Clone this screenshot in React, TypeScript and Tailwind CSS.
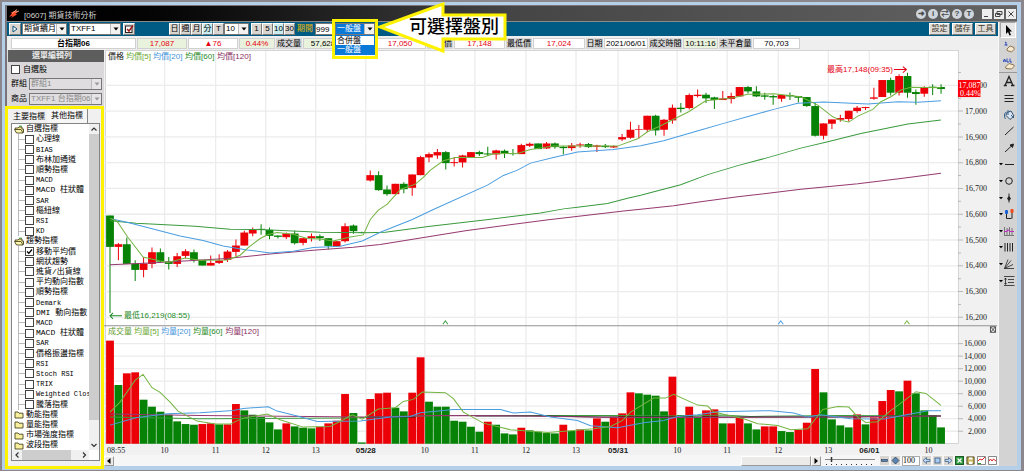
import { useState } from 'react'
import type { ReactNode } from 'react'

type Candle = [up: 0 | 1, top: number, bottom: number, high: number, low: number]

// Body and wick levels are stored in thirds of a pixel below the block's own base line
const BLOCKS: { base: number; candles: Candle[] }[] = [
  {
    base: 200,
    candles: [
      [0, 46, 140, 46, 338], [1, 132, 140, 128, 180], [0, 132, 191, 112, 191], [0, 190, 209, 180, 242], [1, 190, 209, 170, 231],
      [1, 156, 191, 142, 204], [0, 156, 184, 145, 188], [0, 184, 191, 170, 208], [1, 168, 191, 158, 200], [1, 153, 167, 147, 175],
      [0, 156, 179, 148, 187], [0, 179, 196, 179, 196], [1, 188, 196, 166, 196], [1, 181, 188, 162, 191], [1, 154, 179, 149, 185],
      [1, 136, 155, 118, 168], [1, 97, 136, 92, 136], [1, 87, 100, 82, 108], [0, 86, 89, 72, 104], [0, 89, 107, 82, 117],
      [0, 106, 110, 106, 115], [1, 100, 111, 97, 116], [0, 100, 129, 92, 133], [1, 114, 128, 114, 135], [1, 108, 114, 100, 124],
      [0, 108, 114, 103, 122], [0, 114, 137, 114, 147], [1, 123, 138, 123, 140], [1, 78, 123, 69, 127], [0, 76, 93, 73, 101],
      [0, 96, 98, 95, 99],
    ],
  },
  {
    base: 60,
    candles: [
      [1, 345, 361, 331, 364], [0, 345, 390, 333, 392], [0, 388, 402, 376, 407], [1, 371, 402, 371, 402], [0, 371, 387, 366, 399],
      [1, 343, 383, 343, 407], [1, 291, 345, 287, 345], [1, 282, 292, 277, 306], [1, 276, 286, 267, 296], [0, 276, 309, 273, 328],
      [1, 306, 309, 291, 319], [1, 286, 307, 284, 322], [1, 276, 291, 276, 291], [0, 276, 282, 272, 288], [0, 280, 283, 260, 287],
      [1, 271, 283, 269, 298], [0, 272, 279, 268, 294], [0, 279, 282, 267, 286], [1, 255, 282, 251, 282], [1, 251, 257, 247, 261],
      [0, 250, 267, 250, 267], [1, 250, 265, 246, 267], [0, 250, 261, 247, 266], [0, 260, 264, 258, 283], [1, 256, 264, 249, 272],
      [1, 253, 256, 248, 263], [0, 252, 261, 249, 264], [1, 256, 260, 254, 276], [0, 257, 261, 252, 264], [1, 258, 262, 256, 264],
      [1, 231, 238, 222, 243], [1, 209, 233, 185, 236], [1, 207, 209, 195, 235], [1, 167, 209, 167, 216], [0, 167, 211, 164, 226],
      [1, 179, 209, 177, 227], [1, 143, 181, 133, 191], [0, 143, 147, 129, 157], [1, 105, 144, 100, 148], [1, 104, 108, 88, 112],
      [0, 104, 115, 98, 129], [0, 112, 120, 110, 147], [1, 115, 120, 93, 120], [1, 108, 117, 98, 130], [1, 81, 109, 81, 109],
      [0, 81, 94, 78, 100], [0, 94, 109, 79, 111], [0, 106, 110, 98, 119], [0, 108, 112, 105, 134], [1, 105, 116, 105, 125],
      [0, 105, 109, 97, 120], [0, 108, 113, 108, 127], [0, 111, 138, 111, 140], [0, 138, 227, 128, 229], [1, 190, 227, 190, 238],
      [1, 178, 191, 178, 207], [1, 174, 179, 164, 185], [1, 152, 177, 152, 184], [1, 143, 153, 138, 158], [1, 141, 144, 140, 150],
      [1, 112, 116, 83, 119], [1, 60, 111, 60, 111], [0, 60, 98, 53, 106], [1, 48, 98, 43, 106], [0, 48, 98, 38, 113],
      [0, 96, 102, 88, 134], [1, 81, 101, 79, 110], [0, 80, 83, 73, 105], [0, 81, 87, 73, 101],
    ],
  },
]

// Negative = down bar
const VOLUMES = [
  309, -176, 211, 214, -132, -111, -96, -87, -67, -59, -57, 59, 61, -58, 58, 119, -100, -87, -80, -64,
  -43, 61, -52, -48, -46, 51, 61, 69, 149, -92, -4, 134, 151, 153, -108, -97, 153, 259, -126, -111,
  -111, -69, -66, -51, -36, 66, -57, -31, -28, 48, -40, -36, -32, -31, 57, -38, 43, -40, 76, -66,
  81, 91, 154, -151, -147, -144, -97, 201, -86, 111, -80, 100, 103, -61, 61, 80, -61, -43, 52, 52,
  -38, -35, 42, 63, 224, -154, -73, -55, -49, 88, -58, 79, 128, 161, -157, 189, -151, -100, -85, -49,
]

const PRICE_LINES = [
  { cor: '#963a70', pts: '110,264.5 150,262.7 227,258.3 267,254 313,250 353,247 380,244.3 465,230.5 548,219.5 623,210.7 640,209 673,205.5 700,201.5 737,196.7 800,189 857,183.7 900,178.3 940,173' },
  { cor: '#3a9a3e', pts: '110,220.5 136,223 195,226 230,229 265,229.5 320,232 365,232.5 385,232 430,226 486,219.5 540,212.7 563,208.7 577,207 607,203.3 627,198 640,195 680,184.5 707,174.5 737,165.5 767,157.5 800,148 827,141.7 860,133.5 907,124 940,120' },
  { cor: '#4a9de0', pts: '112,218.7 127,222 180,235.7 203,240.3 223,245.7 247,249.7 270,252.7 293,251 313,247.3 340,246 362,240.7 380,232 412,219.3 433,209.3 487,185 503,175.3 517,170 530,163 553,157.3 577,152 613,149.3 640,145.7 663,140.7 700,130 723,123.3 750,115.7 773,109.3 797,103.3 823,102 867,104 897,101.7 917,102.3 940,100.7' },
  { cor: '#74b440', pts: '110,218 117,221 128,237.3 143,256.7 160,260.7 168,262.3 185,257.7 200,260 227,259.7 240,255 248,247.3 260,238.3 268,234.3 277,232.3 293,234 307,238.3 320,238.7 333,240.7 350,236.7 363,234.7 370,219.3 378,210 387,204 400,189.3 415,184 423,177.3 430,170 443,160.7 455,157.3 482,157.3 493,153.7 517,153.3 530,149.3 553,146 617,146 637,138.7 647,131.7 660,125.7 688,111.7 705,100.7 733,97.7 747,94.3 773,93.7 800,96.7 817,105 832,116.7 840,120.3 848,122 857,116 872,109.3 880,101.7 890,96.7 900,90 910,87.3 940,87.7' },
]

const VOLUME_LINES = [
  { cor: '#3a9a3e', pts: '110,416.7 200,418.3 345,417.5 410,415.8 440,415 608,415 690,415.5 720,414.5 750,416 840,415 940,415.5' },
  { cor: '#222222', pts: '365,416.5 415,416.5' },
  { cor: '#222222', pts: '475,415.5 545,415.5 600,416.5 850,416.5 900,415.5 940,415.5' },
  { cor: '#963a70', pts: '110,413.7 200,415 365,416.5 440,415 530,415.5 615,417 720,417 830,416.5 940,415.5' },
  { cor: '#4a9de0', pts: '110,424.7 137,417 167,413.3 200,412.3 233,410 243,408 268,406.3 277,410.7 297,415.7 317,421 360,420.7 390,416.7 410,416 420,412.3 453,409 500,409 513,412.7 530,411.7 550,416.7 577,420 590,425.3 617,427.3 643,422.3 663,420 677,416 697,414.3 717,411.3 770,410.3 793,412.7 807,416.7 820,414.3 850,418.3 883,418.7 907,414 927,410.3 940,410.3' },
  { cor: '#74b440', pts: '110,411.7 120,401.7 135,380 143,374 152,387.3 160,392 170,401.7 178,410.7 197,420.7 215,423.7 230,423.7 243,417.7 267,413.7 280,419.3 303,426.7 330,426 343,419.3 352,414.3 362,418.7 378,408.7 395,407.3 403,401 413,399 422,391.7 445,392.3 453,398.3 463,411.7 483,422.7 510,429.3 547,432 573,430 593,428.3 610,426 622,420 630,411.7 653,397.7 665,397.7 673,394 697,404.7 707,405.7 713,411.7 743,418.3 757,423.3 777,425 790,429.3 807,428.3 822,409 837,406 848,406.7 857,416.7 865,422 877,421.3 890,410 898,404.3 915,391.3 925,393 940,405' },
]

const TIMES: [number, string][] = [
  [164.5, '10'], [215.5, '11'], [265.5, '12'], [315.5, '13'], [365.5, '05/28'], [424.5, '10'], [474.5, '11'], [525.5, '12'],
  [575.5, '13'], [617.5, '05/31'], [676.5, '10'], [726.5, '11'], [777.5, '12'], [827.5, '13'], [868.5, '06/01'], [927.5, '10'],
]

const PRICES = ['17,100', '17,000', '16,900', '16,800', '16,700', '16,600', '16,500', '16,400', '16,300', '16,200']
const VOLUME_TICKS = ['16,000', '14,000', '12,000', '10,000', '8,000', '6,000', '4,000', '2,000']

const LEGEND_COLORS = ['#6aa832', '#3f95dc', '#1e8a26', '#8a2c60']

const TREE = [
  { name: '自選指標', open: true, items: ['心理線', 'BIAS', '布林加通道', '順勢指標', 'MACD', 'MACD 柱狀體', 'SAR', '樞紐線', 'RSI', 'KD'] },
  {
    name: '趨勢指標',
    open: true,
    items: ['移動平均價', '網狀趨勢', '進貨/出貨線', '平均動向指數', '順勢指標', 'Demark', 'DMI 動向指數', 'MACD', 'MACD 柱狀體', 'SAR', '價格振盪指標', 'RSI', 'Stoch RSI', 'TRIX', 'Weighted Clos', '騰落指標'],
  },
  { name: '動能指標', open: false, items: [] },
  { name: '量能指標', open: false, items: [] },
  { name: '市場強度指標', open: false, items: [] },
  { name: '波段指標', open: false, items: [] },
]

const UP = '#ec0008'
const DOWN = '#068206'
const candleX = (i: number) => 110 + i * 8.385

export default function App() {
  const [session, setSession] = useState('一般盤')

  return (
    <div className="relative min-w-[900px] border-2 border-r-[3px] border-b border-[#8b878d] bg-[#b6cfe9] pt-[3px] pr-1 pb-[4px] pl-[3px] font-['Liberation_Sans','Noto_Sans_CJK_TC',sans-serif] text-[8px] leading-[10px] text-black">
      <div className="border-t border-l-2 border-[#77757a] bg-[#efefef]">
        <TitleBar />
        <div className="flex">
          <div className="min-w-0 flex-1">
            <Toolbar session={session} setSession={setSession} />
            <QuoteBar />
            <div className="flex">
              <SidePanel />
              <main className="min-w-0 flex-1">
                <Chart />
                <BottomBar />
              </main>
            </div>
          </div>
          <ToolRail />
        </div>
      </div>
      <Callout />
    </div>
  )
}

function TitleBar() {
  return (
    <header className="flex h-4 items-center border-b border-[#8a8a8a] bg-linear-to-r from-black via-[#454545] to-[#636363] text-[#d5d5d5]">
      <svg className="ml-px h-3 w-3" viewBox="0 0 12 12">
        <path d="M1 9 L4 5.5 L2.5 5 L9 1.5 L7 4 L11 3 L7.5 6 L9 6.5 L3 10 L5 7.6 Z" fill="#ff4a28" />
        <path d="M4 5.5 L9 1.5 M7 4 L11 3" stroke="#ffc9a8" strokeWidth=".7" />
      </svg>
      <h1 className="ml-1 whitespace-nowrap pt-1">[0607] 期貨技術分析</h1>
      <div className="ml-auto flex items-center gap-0.5">
        {['➜', 'i', '⇄', '?', 'T'].map(g => (
          <button key={g} className="flex h-2.5 w-2.5 items-center justify-center rounded-full bg-[#cfd5dc] text-[8px] font-bold leading-none text-[#4a4a4a]">
            {g}
          </button>
        ))}
      </div>
      <div className="mr-px ml-2 flex gap-0.5">
        <WindowButton label="縮小"><path d="M2 7.5h4" /></WindowButton>
        <WindowButton label="還原"><path d="M3 2.5h5v3H3zM1.500 4.500h4.500v3h-4.500z" /></WindowButton>
        <WindowButton label="關閉"><path d="M2.500 2.500l5 5M7.500 2.500l-5 5" /></WindowButton>
      </div>
    </header>
  )
}

function WindowButton({ label, children }: { label: string; children: ReactNode }) {
  return (
    <button aria-label={label} className="h-2.5 w-2.5 bg-[#eeeeee]">
      <svg viewBox="0 0 10 10" className="h-2.5 w-2.5" fill="none" stroke="#444">{children}</svg>
    </button>
  )
}

function ArrowIcon({ className = '' }: { className?: string }) {
  return (
    <svg viewBox="0 0 8 8" className={`h-2 w-2 ${className}`}><path d="M1.500 2.500h5L4 5.500z" fill="currentColor" /></svg>
  )
}

function Combo({ label, options, className, disabled, selected }: {
  label: string; options: string[]; className: string; disabled?: boolean; selected?: boolean
}) {
  return (
    <div className={`relative flex h-3 border border-[#777] bg-white ${className}`}>
      <select
        aria-label={label}
        disabled={disabled}
        className={`h-full w-full appearance-none overflow-hidden pl-px leading-[10px] outline-none ${disabled ? 'bg-[#dfdddf] text-[#8a8a8a]' : ''} ${selected ? 'bg-[#0a78d7] text-white' : ''}`}
      >
        {options.map(o => <option key={o}>{o}</option>)}
      </select>
      <span className={`pointer-events-none absolute inset-y-0 right-0 flex w-2.5 items-center justify-center border-l border-[#bbb] ${disabled ? 'bg-[#e6e4e6] text-[#999]' : 'bg-[#f4f2f0] text-black'}`}>
        <ArrowIcon />
      </span>
    </div>
  )
}

function Toolbar({ session, setSession }: { session: string; setSession: (s: string) => void }) {
  const btn = 'h-3 border border-[#7a7a7a] border-t-white border-l-white text-center leading-[10px]'
  return (
    <div className="flex h-[14px] items-center bg-[#005b84] px-0.5">
      <button aria-label="展開" className={`${btn} flex w-3 items-center justify-center bg-[#d9d5d0]`}>
        <svg viewBox="0 0 8 8" className="h-2 w-2"><path d="M2 1v6l4-3z" fill="#fff" stroke="#0b527a" /></svg>
      </button>
      <Combo label="商品類別" options={['期貨續月']} className="ml-px w-[45px]" />
      <Combo label="商品代碼" options={['TXFF1']} className="ml-0.5 w-[52px]" />
      <button aria-label="套用" className={`${btn} ml-0.5 flex w-3 items-center justify-center bg-[#d9d5d0]`}>
        <svg viewBox="0 0 10 10" className="h-2.5 w-2.5" fill="none">
          <rect x="1.500" y="2" width="6.500" height="6.500" fill="#fff" stroke="#222" />
          <path d="M3 5l2 2 4-5.500" stroke="#a01818" strokeWidth="1.500" />
        </svg>
      </button>
      <div className="ml-[34px] flex">
        {['日', '週', '月', '分', 'T'].map(p => (
          <button key={p} className={`${btn} w-[11px] ${p === '分' ? 'bg-[#c8ecf0]' : 'bg-[#d9d5d0]'}`}>{p}</button>
        ))}
      </div>
      <Combo label="分鐘" options={['10']} className="w-[25px]" />
      <div className="ml-0.5 flex">
        {['1', '5', '10', '30'].map(m => (
          <button key={m} className={`${btn} w-[11px] ${m === '10' ? 'bg-[#c8ecf0]' : 'bg-[#d9d5d0]'}`}>{m}</button>
        ))}
      </div>
      <label className="ml-0.5 flex items-center gap-0.5 whitespace-nowrap font-bold text-[#b89f2c]">
        期間
        <input defaultValue="999" className="h-3 w-[18px] border border-[#777] bg-white font-normal text-black outline-none" />
      </label>
      <div className="relative z-10 ml-0.5">
        <Combo label="盤別" options={[session]} className="w-10" selected />
        <ul role="listbox" aria-label="盤別" className="absolute top-3 left-0 w-10 border border-[#0a78d7] bg-white">
          {['合併盤', '一般盤'].map(s => (
            <li
              key={s}
              role="option"
              aria-selected={s === session}
              onClick={() => setSession(s)}
              className={`h-[9px] pl-px leading-[9px] ${s === session ? 'bg-[#0a78d7] text-white' : ''}`}
            >
              {s}
            </li>
          ))}
        </ul>
      </div>
      <div className="ml-auto flex gap-0.5">
        {['設定', '儲存', '工具'].map(b => (
          <button key={b} className={`${btn} w-[21px] bg-[#e0ddd8] text-[#3d3a2c]`}>{b}</button>
        ))}
      </div>
    </div>
  )
}

function Cell({ children, className }: { children: ReactNode; className: string }) {
  return <dd className={`h-[11px] shrink-0 border border-[#d0d0d0] text-center leading-[10px] ${className}`}>{children}</dd>
}

function Term({ children, className }: { children: ReactNode; className: string }) {
  return <dt className={`h-[11px] shrink-0 whitespace-nowrap bg-[#d6d6d6] text-center leading-[11px] ${className}`}>{children}</dt>
}

function QuoteBar() {
  return (
    <dl className="flex h-[14px] items-center gap-px pl-1">
      <Cell className="w-[125px] bg-white font-bold">台指期06</Cell>
      <Cell className="w-[50px] bg-[#e9f2dc] text-[#e60012]">17,087</Cell>
      <Cell className="w-[50px] bg-white text-[#e60012]">▲76</Cell>
      <Cell className="w-9 bg-[#e9f2dc] text-[#e60012]">0.44%</Cell>
      <Term className="w-[26px]">成交量</Term>
      <Cell className="w-10 bg-[#e9f2dc]">57,628</Cell>
      <Term className="w-[29px]">開盤價</Term>
      <Cell className="w-[52px] bg-white text-[#e60012]">17,050</Cell>
      <Term className="w-[26px]">最高價</Term>
      <Cell className="w-[51px] bg-white text-[#e60012]">17,148</Cell>
      <Term className="w-[26px]">最低價</Term>
      <Cell className="w-[52px] bg-white text-[#e60012]">17,024</Cell>
      <Term className="w-[17px]">日期</Term>
      <Cell className="w-[44px] bg-white">2021/06/01</Cell>
      <Term className="w-[33px]">成交時間</Term>
      <Cell className="w-[35px] bg-[#e9f2dc]">10:11:16</Cell>
      <Term className="w-[33px]">未平倉量</Term>
      <Cell className="w-[47px] bg-white">70,703</Cell>
    </dl>
  )
}

function FolderIcon({ open }: { open: boolean }) {
  return (
    <svg viewBox="0 0 10 9" className="h-[9px] w-2.5 shrink-0" strokeWidth=".9" stroke="#4a4620">
      {open ? (
        <>
          <path d="M1 3h3l1-1h3v2h1.500v3.500H2.500z" fill="#f4e98c" />
          <path d="M.5 4.500h6.500l2 3.500h-6.500z" fill="#fdf7b4" />
          <path d="M5 1.200h3" stroke="#2c8b2c" />
        </>
      ) : (
        <path d="M1 2h3l1 1.200h4v4.800H1z" fill="#f8ef9c" />
      )}
    </svg>
  )
}

function TickBox({ checked = false }: { checked?: boolean }) {
  return (
    <span className="relative flex h-[9px] w-[9px] shrink-0">
      <input type="checkbox" defaultChecked={checked} className="peer h-full w-full appearance-none border border-[#444] bg-white" />
      <svg viewBox="0 0 9 9" className="pointer-events-none absolute inset-0 hidden h-full w-full peer-checked:block">
        <path d="M2 4.500l1.800 1.800L7 2.500" fill="none" stroke="#000" strokeWidth="1.300" />
      </svg>
    </span>
  )
}

function SidePanel() {
  return (
    <aside className="flex w-[97px] shrink-0 flex-col bg-[#dad8da]">
      <h2 className="h-3 border-l border-[#ddd] bg-[#5d5d5d] pr-2 text-center font-bold leading-[12px] text-[#e8e8e8]">選單編輯列</h2>
      <label className="flex h-[15px] items-center gap-[3px] pl-1">
        <TickBox />
        自選股
      </label>
      <div className="flex h-[14px] items-center gap-0.5 pl-1">
        群組 <Combo label="群組" options={['群組1']} className="w-[73px]" disabled />
      </div>
      <div className="flex h-[15px] items-center gap-0.5 pl-1">
        商品 <Combo label="商品" options={['TXFF1 台指期06;1']} className="w-[73px]" disabled />
      </div>

      <section className="relative flex flex-1 flex-col bg-[#f0f0f0] pt-[3px] pr-1 pb-[5px] pl-1">
        <div role="tablist" className="flex h-[14px] items-end">
          <button role="tab" aria-selected="false" className="h-3 w-9 whitespace-nowrap text-center">主要指標</button>
          <button role="tab" aria-selected="true" className="h-[14px] w-[41px] whitespace-nowrap border-r border-[#888] bg-[#f6f6f6] text-center">其他指標</button>
        </div>
        <div className="flex flex-1 flex-col border border-[#848484] bg-white">
          <div className="flex flex-1">
            <div className="flex w-0 flex-1 flex-col overflow-hidden">
              {TREE.map(group => [
                <div key={group.name} className="flex flex-1 items-center gap-0.5 whitespace-nowrap pl-0.5">
                  <FolderIcon open={group.open} />
                  {group.name}
                </div>,
                ...group.items.map(item => (
                  <label key={group.name + item} className="ml-1.5 flex flex-1 items-center whitespace-nowrap border-l border-[#bbb]">
                    <span className="h-px w-1.5 shrink-0 bg-[#bbb]" />
                    <TickBox checked={item === '移動平均價'} />
                    <span className={`ml-0.5 font-['Liberation_Mono','Noto_Sans_CJK_TC',monospace] ${/^[\w ]+$/.test(item) ? 'text-[7px]' : ''}`}>{item}</span>
                  </label>
                )),
              ])}
            </div>
            <div className="flex w-2.5 flex-col items-center bg-[#f0f0f0]">
              <svg viewBox="0 0 10 10" className="h-2.5 w-2.5" fill="none" stroke="#333" strokeWidth="1.200"><path d="M2.500 6.500L5 4l2.500 2.500" /></svg>
              <div className="w-full flex-1 bg-[#cdcdcd]" />
              <div className="h-5" />
              <svg viewBox="0 0 10 10" className="h-2.5 w-2.5" fill="none" stroke="#333" strokeWidth="1.200"><path d="M2.500 4L5 6.500 7.500 4" /></svg>
            </div>
          </div>
          <div className="mr-2.5 flex h-2.5 items-center bg-[#f0f0f0]">
            <svg viewBox="0 0 10 10" className="h-2.5 w-2.5" fill="none" stroke="#333" strokeWidth="1.200"><path d="M6.500 2.500L4 5l2.500 2.500" /></svg>
            <div className="h-full w-[49px] bg-[#cdcdcd]" />
            <svg viewBox="0 0 10 10" className="ml-auto h-2.5 w-2.5" fill="none" stroke="#333" strokeWidth="1.200"><path d="M4 2.500L6.500 5 4 7.500" /></svg>
          </div>
        </div>
        <div className="pointer-events-none absolute top-0 right-0 -bottom-[3px] -left-0.5 border-[3px] border-[#fff200]" />
      </section>
    </aside>
  )
}

function Legend({ y, title, titleColor, name }: { y: number; title: string; titleColor: string; name: string }) {
  const start = title.length === 2 ? 126 : 134
  return (
    <g>
      <text x={108} y={y} fill={titleColor}>{title}</text>
      {['[5]', '[20]', '[60]', '[120]'].map((n, i) => (
        <text key={n} x={start + [0, 27, 59, 91][i]} y={y} fill={LEGEND_COLORS[i]}>{name}{n}</text>
      ))}
    </g>
  )
}

function Chart() {
  let index = 0
  return (
    <svg viewBox="104 50 893 405" className="block h-auto w-full" fontSize="8">
      <rect x="104" y="50" width="893" height="405" fill="#f1f1f1" />
      <rect x="105" y="51" width="852" height="392" fill="#fff" />
      <path d="M105 50.500H957.500V443M105.500 50V443H957" fill="none" stroke="#d4d4d4" />

      <g stroke="#ececec" strokeWidth="1.300">
        {PRICES.map((p, i) => <line key={p} x1="105" x2="957" y1={85.3 + i * 25.75} y2={85.3 + i * 25.75} />)}
        {VOLUME_TICKS.map((v, i) => <line key={v} x1="105" x2="957" y1={343.3 + i * 12.5} y2={343.3 + i * 12.5} />)}
        {TIMES.map(([x]) => <line key={x} x1={x} x2={x} y1="51" y2="443" />)}
      </g>

      {/* right axis */}
      <g fontFamily="Liberation Serif, serif" fill="#222">
        {PRICES.map((p, i) => (
          <g key={p}>
            <path d={`M957 ${85.3 + i * 25.75}h5M957 ${72.4 + i * 25.75}h3`} stroke="#b8b8b8" />
            <text x="964" y={88 + i * 25.75}>{p}</text>
          </g>
        ))}
        {VOLUME_TICKS.map((v, i) => (
          <g key={v}>
            <path d={`M957 ${343.3 + i * 12.5}h5`} stroke="#b8b8b8" />
            <text x="985" y={346 + i * 12.5} textAnchor="end">{v}</text>
          </g>
        ))}
        <text x="107" y="453">08:55</text>
        {TIMES.map(([x, t]) => (
          <text key={x} x={x} y="453" textAnchor="middle" fontWeight={t.length > 2 ? 700 : 400} fontFamily={t.length > 2 ? 'Liberation Sans' : undefined}>{t}</text>
        ))}
      </g>

      {VOLUMES.map((v, i) => {
        const h = Math.abs(v) / 3
        return <rect key={i} x={candleX(i) - 3.9} y={443.3 - h} width="7.800" height={h} fill={v > 0 ? UP : DOWN} />
      })}

      {BLOCKS.map(({ base, candles }) => candles.map(([up, top, bottom, high, low]) => {
        const i = index++
        const x = candleX(i)
        const cor = up ? UP : DOWN
        return (
          <g key={i} fill={cor}>
            <line x1={x} x2={x} y1={base + high / 3} y2={base + low / 3} stroke={cor} />
            <rect x={x - 3.9} y={base + top / 3} width="7.800" height={(bottom - top) / 3} />
          </g>
        )
      }))}

      <g fill="none" strokeWidth="1">
        {[...PRICE_LINES, ...VOLUME_LINES].map(l => <polyline key={l.pts} points={l.pts} stroke={l.cor} />)}
        <path d="M442.500 324l2.500-3.500 2.500 3.500" stroke="#3a9a3e" />
        <path d="M777.500 324l2.500-3.500 2.500 3.500" stroke="#4a9de0" />
        <path d="M903.500 324l2.500-3.500 2.500 3.500" stroke="#74b440" />
        <path d="M104 325.500H996" stroke="#929292" />
        <path d="M122 315.500H110M113 312.500l-3 3 3 3" stroke="#1e8a26" />
        <path d="M893 69.500h12M902 66.500l3.500 3-3.500 3" stroke="#e60012" />
        <path d="M989.500 326.500h5v5.500h-5zM989.500 326.500l5 5.500M994.500 326.500l-5 5.500" stroke="#333" strokeWidth=".8" />
      </g>

      <text x="124" y="318" fill="#1e8a26">最低16,219(08:55)</text>
      <text x="892" y="72" fill="#e60012" textAnchor="end">最高17,148(09:35)</text>
      <Legend y={59} title="價格" titleColor="#111" name="均價" />
      <Legend y={334} title="成交量" titleColor="#5f9a2c" name="均量" />

      <rect x="957" y="80" width="22.500" height="17" fill="#fb0008" />
      <g fill="#fff" fontFamily="Liberation Serif, serif">
        <text x="957.500" y="87.500">17,087</text>
        <text x="959" y="95.500">0.44%</text>
      </g>
    </svg>
  )
}

function BottomBar() {
  const icon = 'flex h-[9px] w-[9px] items-center justify-center bg-[#d9d5d0]'
  return (
    <div className="flex h-[11px] items-center bg-[#f6f6f6]">
      <button aria-label="向左捲動" className="flex h-[10px] w-[10px] items-center justify-center border border-[#999] border-t-white border-l-white bg-[#eceae8]">
        <svg viewBox="0 0 6 6" className="h-1.5 w-1.5"><path d="M4.500 0v6L1 3z" /></svg>
      </button>
      <div className="ml-auto h-[10px] w-[70px] border border-[#999] border-t-white border-l-white bg-[#eceae8]" />
      <button aria-label="向右捲動" className="flex h-[10px] w-[10px] items-center justify-center border border-[#999] border-t-white border-l-white bg-[#eceae8]">
        <svg viewBox="0 0 6 6" className="h-1.5 w-1.5"><path d="M1.500 0v6L5 3z" /></svg>
      </button>
      <div className="relative ml-1 h-[10px] w-[51px]">
        <svg viewBox="0 0 51 10" className="h-full w-full" fill="none" stroke="#333">
          <path d="M0 3.500h50" stroke="#888" />
          <path d="M6.500 1v5" strokeWidth="1.500" />
          <path d="M1 8.500h50" strokeDasharray="1 4" />
        </svg>
        <input type="range" aria-label="縮放" defaultValue="12" className="absolute inset-0 h-full w-full opacity-0" />
      </div>
      <div className="mr-px ml-1 flex items-center gap-0.5">
        <button aria-label="縮小比例" className={icon}>
          <svg viewBox="0 0 9 9" className="h-full w-full"><rect x="1.500" y="3.500" width="6" height="2" fill="#5c84b0" stroke="#223a58" strokeWidth=".6" /></svg>
        </button>
        <button aria-label="放大比例" className={icon}>
          <svg viewBox="0 0 9 9" className="h-full w-full"><path d="M4.500 1L8 4.500 4.500 8 1 4.500z" fill="#5c84b0" stroke="#223a58" strokeWidth=".7" /></svg>
        </button>
        <input aria-label="比例" defaultValue="100" className="h-[10px] w-[18px] border border-[#aaa] bg-white font-['Liberation_Serif',serif] outline-none" />
        <button aria-label="上一頁" className={icon}>
          <svg viewBox="0 0 9 9" className="h-full w-full"><path d="M1 4.500L4.500 1.500v2H8v2H4.500v2z" fill="#bcd8f4" stroke="#34587e" strokeWidth=".7" /></svg>
        </button>
        <button aria-label="停止" className={icon}>
          <svg viewBox="0 0 9 9" className="h-full w-full"><rect x="2" y="2" width="5" height="5" fill="#a8ccf0" stroke="#34587e" strokeWidth=".8" /></svg>
        </button>
        <button aria-label="下一頁" className={icon}>
          <svg viewBox="0 0 9 9" className="h-full w-full"><path d="M8 4.500L4.500 1.500v2H1v2h3.500v2z" fill="#bcd8f4" stroke="#34587e" strokeWidth=".7" /></svg>
        </button>
        <button aria-label="匯出" className={icon}>
          <svg viewBox="0 0 9 9" className="h-full w-full"><rect x=".5" y=".5" width="8" height="8" fill="#2c9a3c" stroke="#1b5c26" /><path d="M2.500 2.500l4 4M6.500 2.500l-4 4" stroke="#fff" strokeWidth="1.200" /></svg>
        </button>
        <button aria-label="存檔" className={icon}>
          <svg viewBox="0 0 9 9" className="h-full w-full"><path d="M1 1h7v7H1z" fill="#c9b95c" stroke="#5a5226" /><path d="M3 1.500h3.500v2H3zM3 5.500h3.500v2.500H3z" fill="#fff" /></svg>
        </button>
        <button aria-label="價圖" className={icon}>
          <svg viewBox="0 0 9 9" className="h-full w-full"><path d="M.5.5h8v8h-8z" fill="#fff" stroke="#8a8a8a" /><path d="M1 5l2-2 2 1 3-3" fill="none" stroke="#e02020" /><path d="M1 7.500h3" stroke="#2a9a30" /></svg>
        </button>
        <button aria-label="量圖" className={icon}>
          <svg viewBox="0 0 9 9" className="h-full w-full"><path d="M.5.5h8v8h-8z" fill="#fff" stroke="#8a8a8a" /><path d="M1 5l1.500-2 1.500 2 1.500-2 2.500 2" fill="none" stroke="#e02020" /></svg>
        </button>
      </div>
    </div>
  )
}

const RAIL_TOP: { label: string; icon: ReactNode }[] = [
  { label: '選取', icon: <path d="M4 1v9l2-2 1.500 3.500 1.500-.6L7.500 7.500H10z" fill="#000" stroke="none" /> },
  {
    label: '擦除',
    icon: <><path d="M2 1.500l1-.5v3M1.500 4h3" stroke="#2846b8" /><path d="M4 8l3-3 4 1.500v2L8.500 11 4 9.500z" fill="#f7ecd2" stroke="#8a7450" /></>,
  },
  {
    label: '全部擦除',
    icon: <><path d="M0 4l1.500-3L3 4M.7 3h1.600M4 .5v3.500h2M7 .5v3.500h2" stroke="#2846b8" /><path d="M2.500 9l3.500-3.500 5 1.500v1.500L8.500 11 3 10.500z" fill="#f7ecd2" stroke="#8a7450" /></>,
  },
]

const RAIL: { label: string; menu?: boolean; icon: ReactNode }[] = [
  { label: '文字', icon: <path d="M2 10.500L6 1.500l4 9M3.500 7.500h5M.8 10.500h3M8 10.500h3.500" strokeWidth="1.300" /> },
  { label: '線寬', icon: <path d="M1.500 3.500h9M1.500 6.500h9M1.500 9.500h9" /> },
  { label: '填色', icon: <><path d="M4 3.500L8 2l3 5-4 3.500-4-4z" fill="#d8e6f4" stroke="#35506e" /><path d="M3.500 3C1 3.500 1 8 2.500 10M5 1v5M8 6l3 3" stroke="#35608e" /></> },
  { label: '直線', icon: <path d="M2 10L10.500 2" /> },
  { label: '箭頭', icon: <><path d="M2 10l7-6.500" /><path d="M10.500 2L9.500 5.500 7 3z" fill="#222" /></> },
  { label: '水平線', menu: true, icon: <path d="M2 6.500h9" /> },
  { label: '圓形', menu: true, icon: <circle cx="6" cy="6" r="3.300" /> },
  { label: '標記', menu: true, icon: <><path d="M6 1.500v9" /><path d="M6 4l2 2.500-2 2.500-2-2.500z" fill="#222" stroke="none" /></> },
  { label: 'K線', menu: true, icon: <><rect x="2" y="2" width="3" height="4" rx="1" fill="#1860d8" stroke="none" /><rect x="7.500" y="1" width="3" height="4" rx="1" fill="#f04818" stroke="none" /><path d="M3.500 6v4.500h5M9 5v5.500" /></> },
  { label: '週期線', menu: true, icon: <><path d="M1.500 2v8M4 3v7M6.500 2v8M9 3v7M1 10.500h10" stroke="#777" /><path d="M1 6.500h3l1-2 1.500 2h4.500" stroke="#c028c0" /></> },
  { label: '垂直線', menu: true, icon: <path d="M2 2v8.500M4.500 2v8.500M7 2v8.500M9.500 2v8.500" /> },
  { label: '扇形線', menu: true, icon: <path d="M1.500 10.500L5 1.500M1.500 10.500l6.500-8M1.500 10.500l8.500-4M1.500 10.500h9.500" strokeWidth=".8" /> },
  { label: '黃金分割', menu: true, icon: <path d="M1 1.500h10.500M1 10.500h10.500M5 4.500h6M5 7.500h6M2.500 3v6M1.500 4.500L2.500 3l1 1.500M1.500 8l1 1.500 1-1.500" strokeWidth=".8" /> },
]

function ToolRail() {
  return (
    <nav className="w-[19px] shrink-0 border-l border-[#f8f8f8] bg-[#d3d3d3]">
      <div className="flex h-[51px] flex-col border-b border-[#999]">
        {RAIL_TOP.map((t, i) => (
          <button key={t.label} aria-label={t.label} className="flex flex-1 items-center justify-end pr-px">
            <span className={`p-px ${i === 0 ? 'border border-[#a5a5a5] border-r-white border-b-white bg-[#e8e8e8]' : ''}`}>
              <svg viewBox="0 0 12 12" className="h-3 w-3" fill="none" stroke="#222">{t.icon}</svg>
            </span>
          </button>
        ))}
      </div>
      <div className="flex h-[216px] flex-col">
        {RAIL.map(t => (
          <button key={t.label} aria-label={t.label} className="flex flex-1 items-center justify-end pr-0.5">
            {t.menu && <svg viewBox="0 0 4 4" className="h-1 w-1"><path d="M0 1h4L2 3.300z" /></svg>}
            <svg viewBox="0 0 12 12" className="h-3 w-3" fill="none" stroke="#222">{t.icon}</svg>
          </button>
        ))}
      </div>
    </nav>
  )
}

function Callout() {
  return (
    <>
      <div className="pointer-events-none absolute top-[17px] left-[330px] z-20 h-[40px] w-[46px] border-[3px] border-[#fff200]" />
      <div className="pointer-events-none absolute top-0 left-[374px] z-20 h-[52px] w-[134px]">
        <svg viewBox="0 0 134 52" className="absolute inset-0 h-full w-full">
          <path d="M4 25L67 2v11h62v24H67v12z" fill="#fff" stroke="#fff200" strokeWidth="3" />
        </svg>
        <p className="relative pt-3.5 pl-[33px] text-[18px] leading-[22px] font-medium whitespace-nowrap">可選擇盤別</p>
      </div>
    </>
  )
}
